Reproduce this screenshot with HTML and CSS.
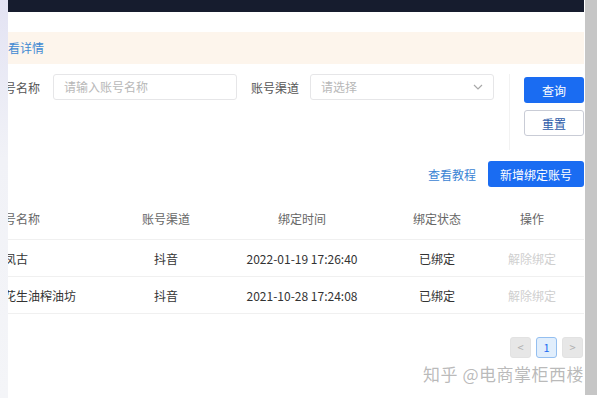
FILE: index.html
```html
<!DOCTYPE html>
<html>
<head>
  <title>账号绑定</title>
  <link rel="stylesheet" href="styles.css">
</head>
<body>
  <div class="page">
    <div class="edge"></div>

    <div class="main">
      <div class="content">
        <div class="topbar"></div>

        <div class="notice">查看详情</div>

        <!-- 筛选 -->
        <div class="filters">
          <div class="fields">
            <span class="label">账号名称</span>
            <div class="input">请输入账号名称</div>
            <span class="label">账号渠道</span>
            <div class="input select">
              请选择
              <svg width="10" height="6" viewBox="0 0 10 6"><polyline points="1,1 5,5 9,1" fill="none" stroke="#a8a8a8" stroke-width="1.2"/></svg>
            </div>
          </div>
          <div class="actions">
            <button class="btn primary">查询</button>
            <button class="btn plain">重置</button>
          </div>
        </div>

        <div class="toolbar">
          <a class="link">查看教程</a>
          <button class="btn primary wide">新增绑定账号</button>
        </div>

        <div class="table">
          <div class="row head">
            <div class="cell first">账号名称</div>
            <div class="cell">账号渠道</div>
            <div class="cell">绑定时间</div>
            <div class="cell">绑定状态</div>
            <div class="cell">操作</div>
          </div>
          <div class="row">
            <div class="cell first">小凤古</div>
            <div class="cell">抖音</div>
            <div class="cell">2022-01-19 17:26:40</div>
            <div class="cell">已绑定</div>
            <div class="cell muted">解除绑定</div>
          </div>
          <div class="row">
            <div class="cell first">老花生油榨油坊</div>
            <div class="cell">抖音</div>
            <div class="cell">2021-10-28 17:24:08</div>
            <div class="cell">已绑定</div>
            <div class="cell muted">解除绑定</div>
          </div>
        </div>

        <div class="pager">
          <span class="page-btn off">&lt;</span>
          <span class="page-btn current">1</span>
          <span class="page-btn off">&gt;</span>
        </div>
      </div>

      <div class="watermark">知乎 @电商掌柜西楼</div>
    </div>

    <div class="scrollbar"></div>
  </div>
</body>
</html>
```

FILE: styles.css
```css
body {
  margin: 0;
  padding: 0;
  background-color: #fff;
  font-family: "Noto Sans CJK SC", "Noto Sans", sans-serif;
  font-size: 12px;
  color: #333;
}

.page {
  display: flex;
  height: 398px;
  overflow: hidden;
}

.edge {
  width: 8px;
  flex-shrink: 0;
  background: linear-gradient(#e3e3f3, #f1f2f7 40%, #f4f5f8);
}

.main {
  position: relative;
  width: 576px;
  flex-shrink: 0;
  overflow: hidden;
}

.content {
  margin-left: -16px;
  width: 592px;
}

.topbar {
  height: 12px;
  background-color: #161c2e;
  margin-bottom: 20px;
}

.notice {
  height: 32px;
  line-height: 32px;
  padding-left: 4px;
  background-color: #fdf5ec;
  color: #3f89d2;
}

.filters {
  display: flex;
  justify-content: space-between;
  margin-top: 10px;
}

.fields {
  display: flex;
  align-items: center;
  height: 26px;
}

.label {
  color: #555;
  font-size: 12px;
}

.input {
  box-sizing: border-box;
  width: 184px;
  height: 26px;
  line-height: 24px;
  padding: 0 10px;
  margin: 0 14px 0 13px;
  border: 1px solid #e6e6e8;
  border-radius: 3px;
  color: #b8b8b8;
}

.select {
  display: flex;
  justify-content: space-between;
  align-items: center;
  margin: 0 0 0 11px;
}

.actions {
  display: flex;
  flex-direction: column;
  gap: 7px;
  padding: 3px 0 14px 14px;
  border-left: 1px solid #f2f2f2;
}

.btn {
  height: 26px;
  width: 60px;
  border-radius: 3px;
  font-family: inherit;
  font-size: 12px;
  cursor: pointer;
  padding: 0;
}

.btn.primary {
  background-color: #1a6cf2;
  border: none;
  color: #fff;
}

.btn.plain {
  background-color: #fff;
  border: 1px solid #c9ccd6;
  color: #2c5aa8;
}

.btn.wide {
  width: 96px;
}

.toolbar {
  display: flex;
  justify-content: flex-end;
  align-items: center;
  gap: 12px;
  margin-top: 11px;
}

.link {
  color: #3b84d4;
  cursor: pointer;
}

.table {
  margin-top: 10px;
}

.row {
  display: grid;
  grid-template-columns: 130px 88px 184px 86px 104px;
  height: 36px;
  align-items: center;
  border-bottom: 1px solid #f0f0f0;
  color: #333;
}

.row.head {
  height: 42px;
  color: #666;
}

.cell {
  text-align: center;
  white-space: nowrap;
}

.cell.first {
  text-align: left;
}

.cell.muted {
  color: #cfcfcf;
}

.pager {
  display: flex;
  justify-content: flex-end;
  gap: 5px;
  margin: 23px 1px 0 0;
}

.page-btn {
  box-sizing: border-box;
  width: 21px;
  height: 21px;
  line-height: 19px;
  text-align: center;
  border-radius: 3px;
  font-size: 11px;
}

.page-btn.off {
  background-color: #e7e7e7;
  border: 1px solid #e2e2e2;
  color: #b0b0b0;
}

.page-btn.current {
  background-color: #e1eefc;
  border: 1px solid #94bff0;
  color: #1a6cf2;
}

.watermark {
  position: absolute;
  right: 0;
  top: 361px;
  font-size: 17px;
  color: rgba(140, 140, 140, 0.6);
  letter-spacing: 0.5px;
  white-space: nowrap;
}

.scrollbar {
  width: 12px;
  height: 395px;
  margin-left: 1px;
  background-color: #c6c6c6;
  flex-shrink: 0;
}
```
